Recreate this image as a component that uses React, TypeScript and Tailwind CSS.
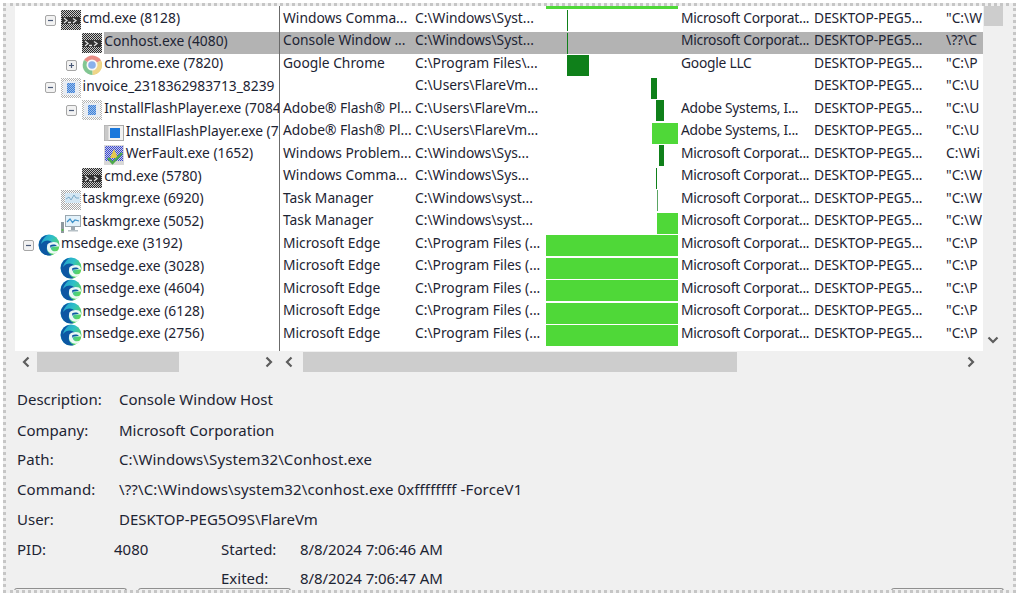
import type { ReactNode } from 'react';

type IconName = 'console' | 'chrome' | 'invoice' | 'flash' | 'wer' | 'taskDim' | 'task' | 'edge';

type Row = {
    level: number;
    toggle?: '+' | '-';
    icon: IconName;
    name: string;
    desc: string;
    path: string;
    bar: [number, number, string];
    company: string;
    user: string;
    cmd: string;
    selected?: boolean;
};

const DARK = '#0f801a';
const BRIGHT = '#4fd838';
const MS = 'Microsoft Corporat...';
const PC = 'DESKTOP-PEG5...';
const EDGE_PATH = 'C:\\Program Files (...';

const rows: Row[] = [
    { level: 1, toggle: '-', icon: 'console', name: 'cmd.exe (8128)', desc: 'Windows Comma...', path: 'C:\\Windows\\Syst...', bar: [21, 1, DARK], company: MS, user: PC, cmd: '"C:\\W' },
    { level: 2, icon: 'console', name: 'Conhost.exe (4080)', desc: 'Console Window ...', path: 'C:\\Windows\\Syst...', bar: [21, 1, DARK], company: MS, user: PC, cmd: '\\??\\C', selected: true },
    { level: 2, toggle: '+', icon: 'chrome', name: 'chrome.exe (7820)', desc: 'Google Chrome', path: 'C:\\Program Files\\...', bar: [21, 22, DARK], company: 'Google LLC', user: PC, cmd: '"C:\\P' },
    { level: 1, toggle: '-', icon: 'invoice', name: 'invoice_2318362983713_8239', desc: '', path: 'C:\\Users\\FlareVm...', bar: [105, 6, DARK], company: '', user: PC, cmd: '"C:\\U' },
    { level: 2, toggle: '-', icon: 'invoice', name: 'InstallFlashPlayer.exe (7084', desc: 'Adobe® Flash® Pl...', path: 'C:\\Users\\FlareVm...', bar: [110, 8, DARK], company: 'Adobe Systems, I...', user: PC, cmd: '"C:\\U' },
    { level: 3, icon: 'flash', name: 'InstallFlashPlayer.exe (7288)', desc: 'Adobe® Flash® Pl...', path: 'C:\\Users\\FlareVm...', bar: [106, 26, BRIGHT], company: 'Adobe Systems, I...', user: PC, cmd: '"C:\\U' },
    { level: 3, icon: 'wer', name: 'WerFault.exe (1652)', desc: 'Windows Problem...', path: 'C:\\Windows\\Sys...', bar: [113, 5, DARK], company: MS, user: PC, cmd: 'C:\\Wi' },
    { level: 2, icon: 'console', name: 'cmd.exe (5780)', desc: 'Windows Comma...', path: 'C:\\Windows\\Sys...', bar: [110, 1, DARK], company: MS, user: PC, cmd: '"C:\\W' },
    { level: 1, icon: 'taskDim', name: 'taskmgr.exe (6920)', desc: 'Task Manager', path: 'C:\\Windows\\syst...', bar: [111, 1, '#5aa564'], company: MS, user: PC, cmd: '"C:\\W' },
    { level: 1, icon: 'task', name: 'taskmgr.exe (5052)', desc: 'Task Manager', path: 'C:\\Windows\\syst...', bar: [111, 21, BRIGHT], company: MS, user: PC, cmd: '"C:\\W' },
    { level: 0, toggle: '-', icon: 'edge', name: 'msedge.exe (3192)', desc: 'Microsoft Edge', path: EDGE_PATH, bar: [0, 132, BRIGHT], company: MS, user: PC, cmd: '"C:\\P' },
    { level: 1, icon: 'edge', name: 'msedge.exe (3028)', desc: 'Microsoft Edge', path: EDGE_PATH, bar: [0, 132, BRIGHT], company: MS, user: PC, cmd: '"C:\\P' },
    { level: 1, icon: 'edge', name: 'msedge.exe (4604)', desc: 'Microsoft Edge', path: EDGE_PATH, bar: [0, 132, BRIGHT], company: MS, user: PC, cmd: '"C:\\P' },
    { level: 1, icon: 'edge', name: 'msedge.exe (6128)', desc: 'Microsoft Edge', path: EDGE_PATH, bar: [0, 132, BRIGHT], company: MS, user: PC, cmd: '"C:\\P' },
    { level: 1, icon: 'edge', name: 'msedge.exe (2756)', desc: 'Microsoft Edge', path: EDGE_PATH, bar: [0, 132, BRIGHT], company: MS, user: PC, cmd: '"C:\\P' },
];

function Dither({ id, a, b }: { id: string; a: string; b: string }) {
    return (
        <pattern id={id} width="2" height="2" patternUnits="userSpaceOnUse">
            <rect width="2" height="2" fill={a} />
            <rect width="1" height="1" fill={b} />
            <rect x="1" y="1" width="1" height="1" fill={b} />
        </pattern>
    );
}

function ProcessIcon({ name }: { name: IconName }) {
    let body: ReactNode = null;
    if (name === 'console') {
        body = (
            <>
                <defs><Dither id="dither-console" a="#2a2a2a" b="#c9c9c9" /></defs>
                <rect x="1" y="1" width="20" height="20" fill="url(#dither-console)" />
                <rect x="2" y="8" width="18" height="7" fill="#333333" />
                <path d="M4 9l3 2.500-3 2.500M8 13.500h3M13 9.500l3 2-3 2.500" stroke="#e0e0e0" strokeWidth="1.300" fill="none" />
            </>
        );
    } else if (name === 'chrome') {
        body = (
            <>
                <defs><Dither id="dither-white" a="#ffffff" b="#ffffff00" /></defs>
                <path d="M11 11L3 6a10 10 0 0 1 17 .5z" fill="#dd5044" />
                <path d="M11 11l9-4.500A10 10 0 0 1 11.500 21z" fill="#e7c04a" />
                <path d="M11 11l.5 10A10 10 0 0 1 3 6z" fill="#3fa757" />
                <circle cx="11" cy="11" r="5.500" fill="#f3f3f3" />
                <circle cx="11" cy="11" r="3.800" fill="#4a86e0" />
                <circle cx="11" cy="11" r="10" fill="url(#dither-white)" opacity="0.35" />
            </>
        );
    } else if (name === 'invoice') {
        body = (
            <>
                <defs>
                    <Dither id="dither-gray" a="#ffffff" b="#b4b4b4" />
                    <Dither id="dither-blue" a="#9cc0ec" b="#3f80d8" />
                </defs>
                <rect x="1" y="1" width="20" height="20" fill="url(#dither-gray)" />
                <rect x="3" y="4" width="16" height="14" fill="#e8ecf2" />
                <rect x="7" y="6" width="8" height="10" fill="url(#dither-blue)" />
            </>
        );
    } else if (name === 'flash') {
        body = (
            <>
                <rect x="1.500" y="3.500" width="19" height="15" fill="#f1f1f1" stroke="#a9a9a9" />
                <rect x="1.500" y="3.500" width="4" height="15" fill="#c9c9c9" />
                <rect x="7" y="6" width="10" height="10" fill="#1a78dc" />
            </>
        );
    } else if (name === 'wer') {
        body = (
            <>
                <defs><Dither id="dither-wer" a="#3a48d0" b="#c8cce8" /></defs>
                <rect x="1" y="1" width="20" height="20" fill="#d8d8d8" />
                <rect x="2" y="2" width="18" height="15" fill="url(#dither-wer)" />
                <path d="M11 5l4 9H7z" fill="#e6c94c" />
                <path d="M5 14l4.500 5L19 9" stroke="#4da84a" strokeWidth="2.500" fill="none" />
            </>
        );
    } else if (name === 'taskDim') {
        body = (
            <>
                <defs><Dither id="dither-task" a="#ffffff" b="#a9a9a9" /></defs>
                <rect x="1" y="1" width="20" height="20" fill="url(#dither-task)" />
                <rect x="5" y="4" width="15" height="10" fill="#d3e6f3" />
                <path d="M6 10l3-2 2 3 3-5 2 3h3" stroke="#7aa9c9" fill="none" />
            </>
        );
    } else if (name === 'task') {
        body = (
            <>
                <rect x="1" y="10" width="3" height="11" fill="#8f9aa0" />
                <rect x="1.700" y="17" width="1.600" height="2" fill="#58c04a" />
                <rect x="5.500" y="3.500" width="15" height="11" fill="#e2f1fa" stroke="#9aa7b0" />
                <path d="M7 10l3-3 2.500 3.500 2.500-2.500 4 1" stroke="#3c90c8" strokeWidth="1.200" fill="none" />
                <rect x="11" y="15" width="4" height="3" fill="#9aa7b0" />
                <rect x="8" y="18" width="10" height="1.500" fill="#b6c0c6" />
            </>
        );
    } else {
        body = (
            <>
                <defs>
                    <linearGradient id="edge-top" x1="0" y1="0" x2="1" y2="0.700">
                        <stop offset="0" stopColor="#1a8fd0" />
                        <stop offset="0.500" stopColor="#2fbfc8" />
                        <stop offset="1" stopColor="#62d84e" />
                    </linearGradient>
                </defs>
                <circle cx="11" cy="11" r="10.500" fill="url(#edge-top)" />
                <path d="M10 1A10 10 0 0 0 1 13c1 5 5 8.500 10 8.500 1 0 2-.1 3-.5-3-1-6-4-5-8 1-3 4-4 6-3.500C13 6 7 5 3 10c1-4 4-8 7-9z" fill="#0d57a3" />
                <path d="M9 14c0 3.500 4 6.500 8 5.500 1.800-.6 3-1.700 3.800-3.200-2.800 1.600-6.800 1.500-7.800-1.300-.3-1 .2-2 1.500-2.500H21c.3-1-.5-3-2-4-2-1-7-1-9.500 1.800C9 11.500 9 13 9 14z" fill="#f4fbfb" opacity="0.95" />
                <path d="M12 11.500c2-1.500 5.500-1.300 7 .2l-5 .8c-1 .4-1.500 1.200-1.300 2.300z" fill="#0d57a3" />
            </>
        );
    }
    return (
        <svg width="22" height="22" viewBox="0 0 22 22" className="shrink-0">
            {body}
        </svg>
    );
}

function Toggle({ kind }: { kind: '+' | '-' }) {
    return (
        <svg width="11" height="11" viewBox="0 0 11 11" className="shrink-0">
            <rect x="0.500" y="0.500" width="10" height="10" rx="1.500" fill="#f2f2f2" stroke="#a6a6a6" />
            <path d={kind === '+' ? 'M3 5.500h5M5.500 3v5' : 'M3 5.500h5'} stroke="#4b5a78" strokeWidth="1.200" />
        </svg>
    );
}

function Chevron({ dir }: { dir: 'left' | 'right' | 'down' }) {
    const d = dir === 'left' ? 'M7.500 1.500L3 6l4.500 4.500' : dir === 'right' ? 'M3.500 1.500L8 6l-4.500 4.500' : 'M1.500 3.500L6 8l4.500-4.500';
    return (
        <svg width="12" height="12" viewBox="0 0 12 12" className="shrink-0">
            <path d={d} stroke="#5d5d5d" strokeWidth="2.200" fill="none" />
        </svg>
    );
}

function TreeRow({ row }: { row: Row }) {
    const iconLeft = row.level * 21.6 + 8;
    return (
        <div className="flex h-[22.5px] items-center whitespace-nowrap" style={{ paddingLeft: iconLeft }}>
            {row.toggle ? <Toggle kind={row.toggle} /> : null}
            <div className={row.toggle ? 'ml-[4px]' : 'ml-[15px]'}>
                <ProcessIcon name={row.icon} />
            </div>
            <span className={`ml-[1px] pb-[4px] leading-[18.5px] grow ${row.selected ? 'bg-[#b3b3b3]' : ''}`}>{row.name}</span>
        </div>
    );
}

function DetailRow({ label, value, className }: { label: string; value: string; className?: string }) {
    return (
        <div className={`flex h-[30px] items-center ${className ?? ''}`}>
            <span className="w-[102px]">{label}</span>
            <span>{value}</span>
        </div>
    );
}

export default function App() {
    return (
        <div className="w-[1019px] h-[596px] bg-white p-[3px] overflow-hidden text-[13.8px] text-[#1d2433] font-['Noto_Sans','Open_Sans',sans-serif]">
            <div className="h-full border-[3px] border-dotted border-[#c6c6c6] bg-[#f0f0f0] flex flex-col overflow-hidden">
                {/* process tree + columns */}
                <div className="flex h-[345px] ml-[9px] mr-[6px] shrink-0">
                    <div className="w-[264px] bg-white overflow-hidden pt-[3px] shrink-0">
                        {rows.map((r) => <TreeRow key={r.name} row={r} />)}
                    </div>
                    <div className="w-px bg-[#6b6b6b] shrink-0" />
                    <div className="w-[703px] bg-white overflow-hidden shrink-0">
                        <div className="h-[3px] pl-[266px]">
                            <div className="w-[132px] h-[3px] bg-[#4fd838]" />
                        </div>
                        {rows.map((r) => (
                            <div key={r.name} className={`flex h-[22.5px] items-center whitespace-nowrap overflow-hidden ${r.selected ? 'bg-[#b3b3b3]' : ''}`}>
                                <span className="w-[135px] pl-[3px] pb-[4px] shrink-0">{r.desc}</span>
                                <span className="w-[131px] pb-[4px] shrink-0">{r.path}</span>
                                <div className="w-[132px] h-full shrink-0 pt-[1px]">
                                    <div className="h-[21px]" style={{ marginLeft: r.bar[0], width: r.bar[1], backgroundColor: r.bar[2] }} />
                                </div>
                                <span className="w-[136px] pl-[3px] pb-[4px] tracking-[-0.25px] shrink-0">{r.company}</span>
                                <span className="w-[132px] pb-[4px] tracking-[-0.1px] shrink-0">{r.user}</span>
                                <span className="pb-[4px] shrink-0">{r.cmd}</span>
                            </div>
                        ))}
                    </div>
                    <div className="w-[20px] flex flex-col justify-between items-center shrink-0 pb-[5px]">
                        <div className="w-[19px] h-[20px] bg-[#cdcdcd]" />
                        <Chevron dir="down" />
                    </div>
                </div>

                {/* horizontal scrollbars */}
                <div className="flex h-[21px] ml-[9px] mr-[26px] items-center shrink-0">
                    <div className="w-[264px] flex items-center justify-between pl-[6px] pr-[4px] shrink-0">
                        <Chevron dir="left" />
                        <div className="w-[142px] h-[20px] bg-[#cdcdcd] ml-[3px] mr-[83px]" />
                        <Chevron dir="right" />
                    </div>
                    <div className="grow flex items-center justify-between pl-[5px] pr-[6px]">
                        <div className="flex items-center">
                            <Chevron dir="left" />
                            <div className="w-[434px] h-[20px] bg-[#cdcdcd] ml-[7px]" />
                        </div>
                        <div className="mr-[4px]">
                            <Chevron dir="right" />
                        </div>
                    </div>
                </div>

                {/* selected process details */}
                <div className="flex flex-col grow pl-[11px] pt-[12px] text-[15px]">
                    <DetailRow label="Description:" value="Console Window Host" className="mb-px" />
                    <DetailRow label="Company:" value="Microsoft Corporation" />
                    <DetailRow label="Path:" value="C:\Windows\System32\Conhost.exe" className="-mt-px tracking-[0.12px]" />
                    <DetailRow label="Command:" value="\??\C:\Windows\system32\conhost.exe 0xffffffff -ForceV1" className="tracking-[0.12px]" />
                    <DetailRow label="User:" value="DESKTOP-PEG5O9S\FlareVm" />
                    <div className="flex h-[30px] items-center">
                        <span className="w-[97px]">PID:</span>
                        <span className="w-[107px]">4080</span>
                        <span className="w-[79px]">Started:</span>
                        <span className="tracking-[-0.1px]">8/8/2024 7:06:46 AM</span>
                    </div>
                    <div className="flex h-[24px] items-start pt-[3px] pl-[204px]">
                        <span className="w-[79px]">Exited:</span>
                        <span className="tracking-[-0.1px]">8/8/2024 7:06:47 AM</span>
                    </div>
                </div>

                {/* tops of the buttons cut off by the window edge */}
                <div className="flex h-[3px] ml-[8px] mr-[9px] shrink-0">
                    <div className="w-[113px] border-t border-x border-[#8f8f8f] rounded-t-sm" />
                    <div className="w-[153px] ml-[11px] border-t border-x border-[#8f8f8f] rounded-t-sm" />
                    <div className="w-[113px] ml-auto border-t border-x border-[#8f8f8f] rounded-t-sm" />
                </div>
            </div>
        </div>
    );
}
